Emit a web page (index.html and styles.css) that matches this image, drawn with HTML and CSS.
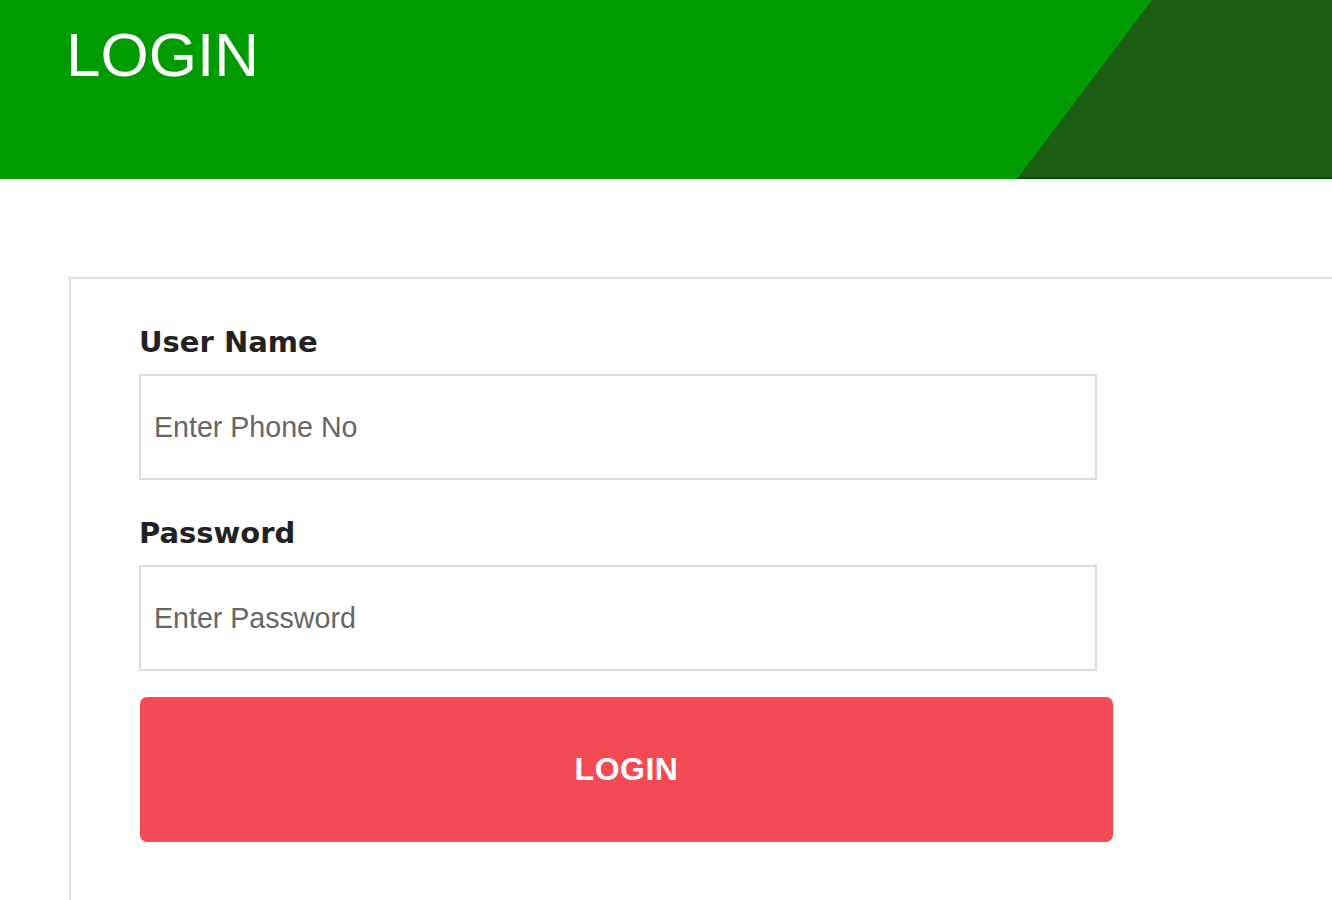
FILE: index.html
```html
<!DOCTYPE html>
<html lang="en">
<head>
    <meta charset="UTF-8">
    <meta name="viewport" content="width=device-width, initial-scale=1.0">
    <title>Login</title>
    <link rel="stylesheet" href="styles.css">
</head>
<body>
    <header class="topbar">
        <h1>LOGIN</h1>
        <!-- dark diagonal corner on the right -->
        <span class="topbar-shade"></span>
    </header>

    <main class="login-wrap">
        <form class="login-card" onsubmit="return false;">
            <label for="username">User Name</label>
            <input type="text" id="username" placeholder="Enter Phone No">

            <label for="password">Password</label>
            <input type="password" id="password" class="last-input" placeholder="Enter Password">

            <button type="submit">LOGIN</button>
        </form>
    </main>
</body>
</html>
```

FILE: styles.css
```css
/* Global Settings */
* {
    box-sizing: border-box;
    margin: 0;
    padding: 0;
}

body {
    display: flex;
    flex-direction: column;
    height: 100vh;
    background-color: #fff;
    font-family: 'Liberation Sans', Arial, sans-serif;
    overflow: hidden;
}

/* Header */
.topbar {
    position: relative;
    flex-shrink: 0;
    height: 179px;
    padding: 24px 66px 0;
    background-color: #009b00;
    overflow: hidden;
}

.topbar h1 {
    position: relative;
    z-index: 1;
    font-size: 62px;
    font-weight: normal;
    line-height: 62px;
    color: #fff;
}

.topbar-shade {
    position: absolute;
    top: 0;
    right: 0;
    bottom: 0;
    left: 1017px;
    background-color: #1c5e13;
    border-bottom: 2px solid #0d4a0c;
    clip-path: polygon(135px 0, 100% 0, 100% 100%, 0 100%);
}

/* Card */
.login-wrap {
    flex: 1;
    display: flex;
    padding: 98px 0 0 69px;
    min-height: 0;
}

.login-card {
    flex: 1;
    display: flex;
    flex-direction: column;
    align-items: flex-start;
    margin-right: -60px;
    padding: 45px 0 0 68px;
    border: 2px solid #e0e0e0;
    border-bottom: none;
}

.login-card label {
    font-family: 'DejaVu Sans', Verdana, sans-serif;
    font-size: 29px;
    font-weight: bold;
    line-height: 36px;
    color: #222;
    margin-bottom: 14px;
}

.login-card input {
    flex-shrink: 0;
    width: 958px;
    height: 106px;
    padding: 0 13px;
    margin-bottom: 35px;
    border: 2px solid #dcdcdc;
    border-radius: 0;
    outline: none;
    font-family: 'Liberation Sans', Arial, sans-serif;
    font-size: 28.6px;
    color: #333;
}

.login-card input::placeholder {
    color: #666;
}

.login-card input.last-input {
    margin-bottom: 26px;
}

.login-card button {
    flex-shrink: 0;
    width: 973px;
    height: 145px;
    margin-left: 1px;
    border: none;
    border-radius: 7px;
    background-color: #f34a56;
    color: #fff;
    font-family: 'Liberation Sans', Arial, sans-serif;
    font-size: 32px;
    font-weight: bold;
    letter-spacing: 0.5px;
    cursor: pointer;
}
```
